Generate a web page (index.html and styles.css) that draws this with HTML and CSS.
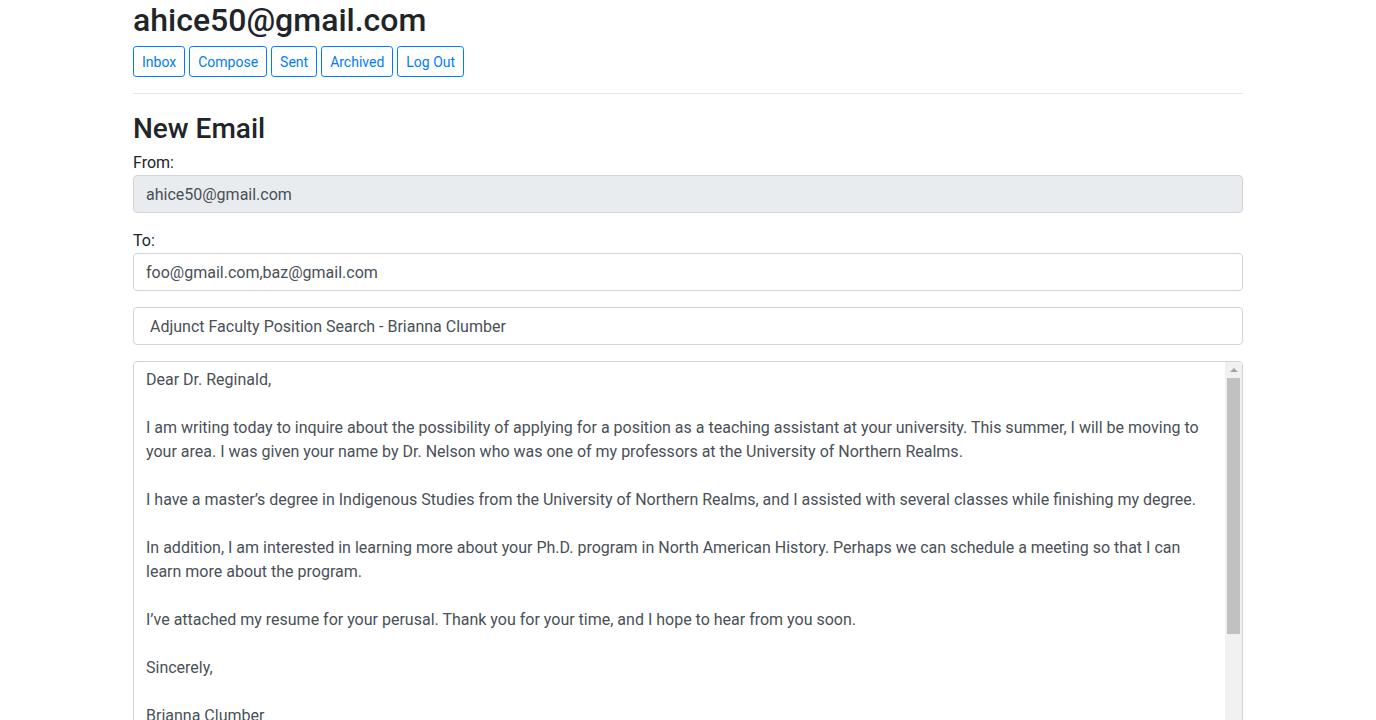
FILE: index.html
```html
<!DOCTYPE html>
<html lang="en">
<head>
<meta charset="utf-8">
<title>Mail</title>
<link rel="stylesheet" href="styles.css">
</head>
<body>
<div class="container">
  <h2 class="user">ahice50@gmail.com</h2>
  <div class="nav">
    <button class="btn">Inbox</button>
    <button class="btn">Compose</button>
    <button class="btn">Sent</button>
    <button class="btn">Archived</button>
    <button class="btn">Log Out</button>
  </div>
  <hr class="rule">
  <h3 class="title">New Email</h3>
  <form class="compose">
    <div class="form-group">
      <div class="label">From:</div>
      <input class="form-control readonly" type="text" value="ahice50@gmail.com" readonly>
    </div>
    <div class="form-group">
      <div class="label">To:</div>
      <input class="form-control" type="text" value="foo@gmail.com,baz@gmail.com">
    </div>
    <div class="form-group">
      <input class="form-control" type="text" value=" Adjunct Faculty Position Search - Brianna Clumber">
    </div>
    <div class="body-wrap">
      <textarea class="form-control body">Dear Dr. Reginald,

I am writing today to inquire about the possibility of applying for a position as a teaching assistant at your university. This summer, I will be moving to your area. I was given your name by Dr. Nelson who was one of my professors at the University of Northern Realms.

I have a master’s degree in Indigenous Studies from the University of Northern Realms, and I assisted with several classes while finishing my degree.

In addition, I am interested in learning more about your Ph.D. program in North American History. Perhaps we can schedule a meeting so that I can learn more about the program.

I’ve attached my resume for your perusal. Thank you for your time, and I hope to hear from you soon.

Sincerely,

Brianna Clumber</textarea>
      <div class="scrollbar">
        <div class="sb-up"><span class="sb-arrow"></span></div>
        <div class="sb-thumb"></div>
      </div>
    </div>
  </form>
</div>
</body>
</html>
```
FILE: styles.css
```css
html {
  overflow: hidden;
}
body {
  margin: 0;
  font-family: Roboto, "Liberation Sans", sans-serif;
  font-size: 16px;
  line-height: 1.5;
  color: #212529;
  background: #fff;
}
.container {
  box-sizing: border-box;
  max-width: 1140px;
  margin: 0 auto;
  padding: 0 15px;
}
.user {
  margin: 0 0 8px;
  padding-top: 1px;
  font-size: 32px;
  font-weight: 500;
  line-height: 1.2;
  height: 38px;
  box-sizing: border-box;
}
.nav {
  display: flex;
  gap: 4px;
  height: 31px;
}
.btn {
  font-family: inherit;
  font-size: 14px;
  line-height: 1.5;
  padding: 4px 8px 3px;
  color: #007bff;
  background: transparent;
  border: 1px solid #007bff;
  border-radius: 3.2px;
  margin: 0;
}
.rule {
  margin: 16px 0;
  border: 0;
  border-top: 1px solid rgba(0, 0, 0, 0.1);
  height: 0;
}
.title {
  margin: 0 0 8px;
  padding-top: 2px;
  box-sizing: border-box;
  height: 33px;
  font-size: 28px;
  font-weight: 500;
  line-height: 1.2;
}
.compose {
  margin: 0;
}
.form-group {
  margin-bottom: 16px;
}
.label {
  line-height: 24px;
}
.form-control {
  display: block;
  box-sizing: border-box;
  width: 100%;
  height: 38px;
  padding: 6px 12px;
  font-family: inherit;
  font-size: 16px;
  line-height: 1.5;
  color: #495057;
  background: #fff;
  border: 1px solid #ced4da;
  border-radius: 4px;
  margin: 0;
}
.readonly {
  background: #e9ecef;
}
.body-wrap {
  position: relative;
}
.body {
  height: 420px;
  padding-right: 29px;
  resize: none;
  overflow: hidden;
  white-space: pre-wrap;
}
.scrollbar {
  position: absolute;
  top: 1px;
  right: 1px;
  width: 17px;
  bottom: 1px;
  background: #f1f1f1;
  border-top-right-radius: 3px;
}
.sb-up {
  height: 16px;
  display: flex;
  align-items: center;
  justify-content: center;
}
.sb-arrow {
  width: 0;
  height: 0;
  border-left: 4px solid transparent;
  border-right: 4px solid transparent;
  border-bottom: 4px solid #a3a3a3;
}
.sb-thumb {
  margin: 0 2px;
  height: 256px;
  background: #c1c1c1;
}
```
